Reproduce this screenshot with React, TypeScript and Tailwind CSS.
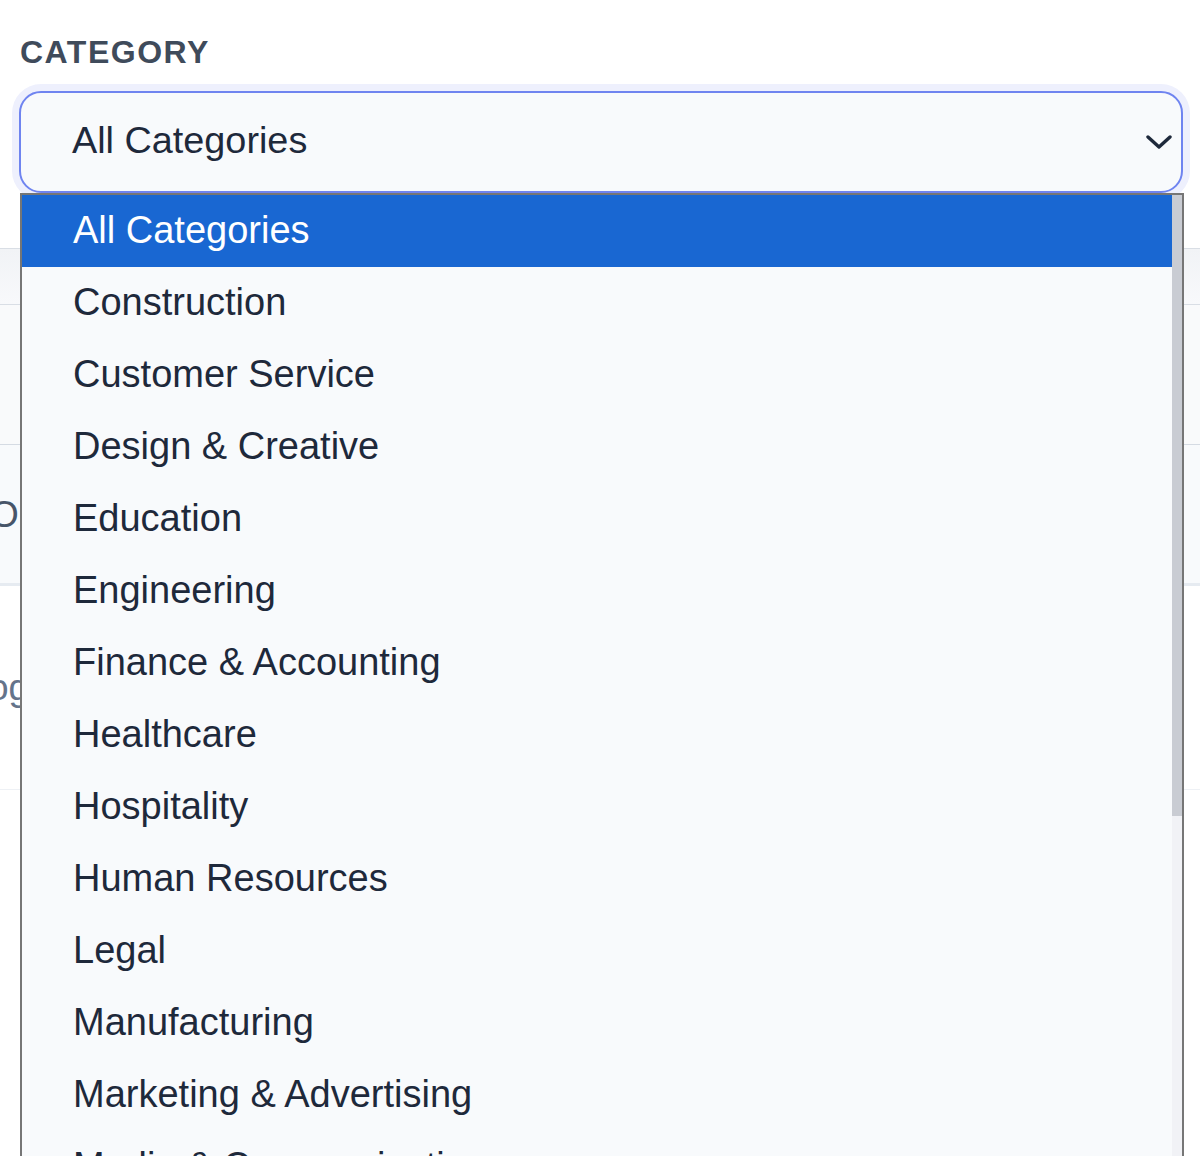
import React from 'react';

const categories = [
  'All Categories',
  'Construction',
  'Customer Service',
  'Design & Creative',
  'Education',
  'Engineering',
  'Finance & Accounting',
  'Healthcare',
  'Hospitality',
  'Human Resources',
  'Legal',
  'Manufacturing',
  'Marketing & Advertising',
  'Media & Communications',
  'Nonprofit',
];

const ChevronDown: React.FC = () => (
  <svg width="26" height="16" viewBox="0 0 26 16" fill="none">
    <path d="M2 3 L13 13 L24 3" stroke="#1e293b" strokeWidth="3.4" strokeLinecap="round" strokeLinejoin="round" />
  </svg>
);

const App: React.FC = () => {
  const selected = 'All Categories';

  return (
    <div className="relative w-[1200px] h-[1156px] overflow-hidden bg-white font-['Liberation_Sans',Arial,sans-serif]">
      {/* filter label */}
      <div className="pt-[36px] pl-[20px]">
        <span className="block text-[32px] leading-none font-bold tracking-[1.5px] text-[#3f4b5b]">CATEGORY</span>
      </div>

      {/* select control */}
      <div className="mt-[23px] ml-[19px] mr-[17px]">
        <div className="flex h-[102px] items-center justify-between rounded-[22px] border-2 border-[#6f84f0] bg-[#f8fafc] pl-[51px] pr-[9px] ring-[7px] ring-[#eef0fd]">
          <span className="pb-[3px] text-[37.8px] leading-none text-[#1e293b]">{selected}</span>
          <ChevronDown />
        </div>
      </div>

      {/* table underneath the open list */}
      <div className="mt-[55px]">
        <div className="h-[57px] border-y border-[#d9dee5] bg-gradient-to-b from-[#f1f3f6] to-[#f8f9fb]" />
        <div className="h-[140px] border-b border-[#d5dbe3] bg-[#f9fafb]" />
        <div className="flex h-[141px] items-center border-b-[3px] border-[#e6ebf1] bg-[#f8fafc]">
          <span className="-ml-[10px] text-[37px] leading-none text-[#475569]">O</span>
        </div>
        <div className="flex h-[204px] items-center border-b border-[#eef1f5] bg-white">
          <span className="-ml-[12px] text-[37px] leading-none text-[#64748b]">og</span>
        </div>
      </div>

      {/* open option list */}
      <div className="absolute left-[20px] top-[193px] flex h-[1000px] w-[1164px] border-2 border-[#767676] bg-[#f8fafc]">
        <ul className="flex-1">
          {categories.map((c) => (
            <li
              key={c}
              className={
                c === selected
                  ? 'flex h-[72px] items-center bg-[#1967d2] pl-[51px] pb-[3px] text-[38px] leading-none text-white'
                  : 'flex h-[72px] items-center pl-[51px] pb-[3px] text-[38px] leading-none text-[#1e293b]'
              }
            >
              {c}
            </li>
          ))}
        </ul>
        <div className="flex w-[10px] flex-col bg-[#f1f2f6]">
          <div className="h-[621px] bg-[#c9ccd3]" />
        </div>
      </div>
    </div>
  );
};

export default App;
